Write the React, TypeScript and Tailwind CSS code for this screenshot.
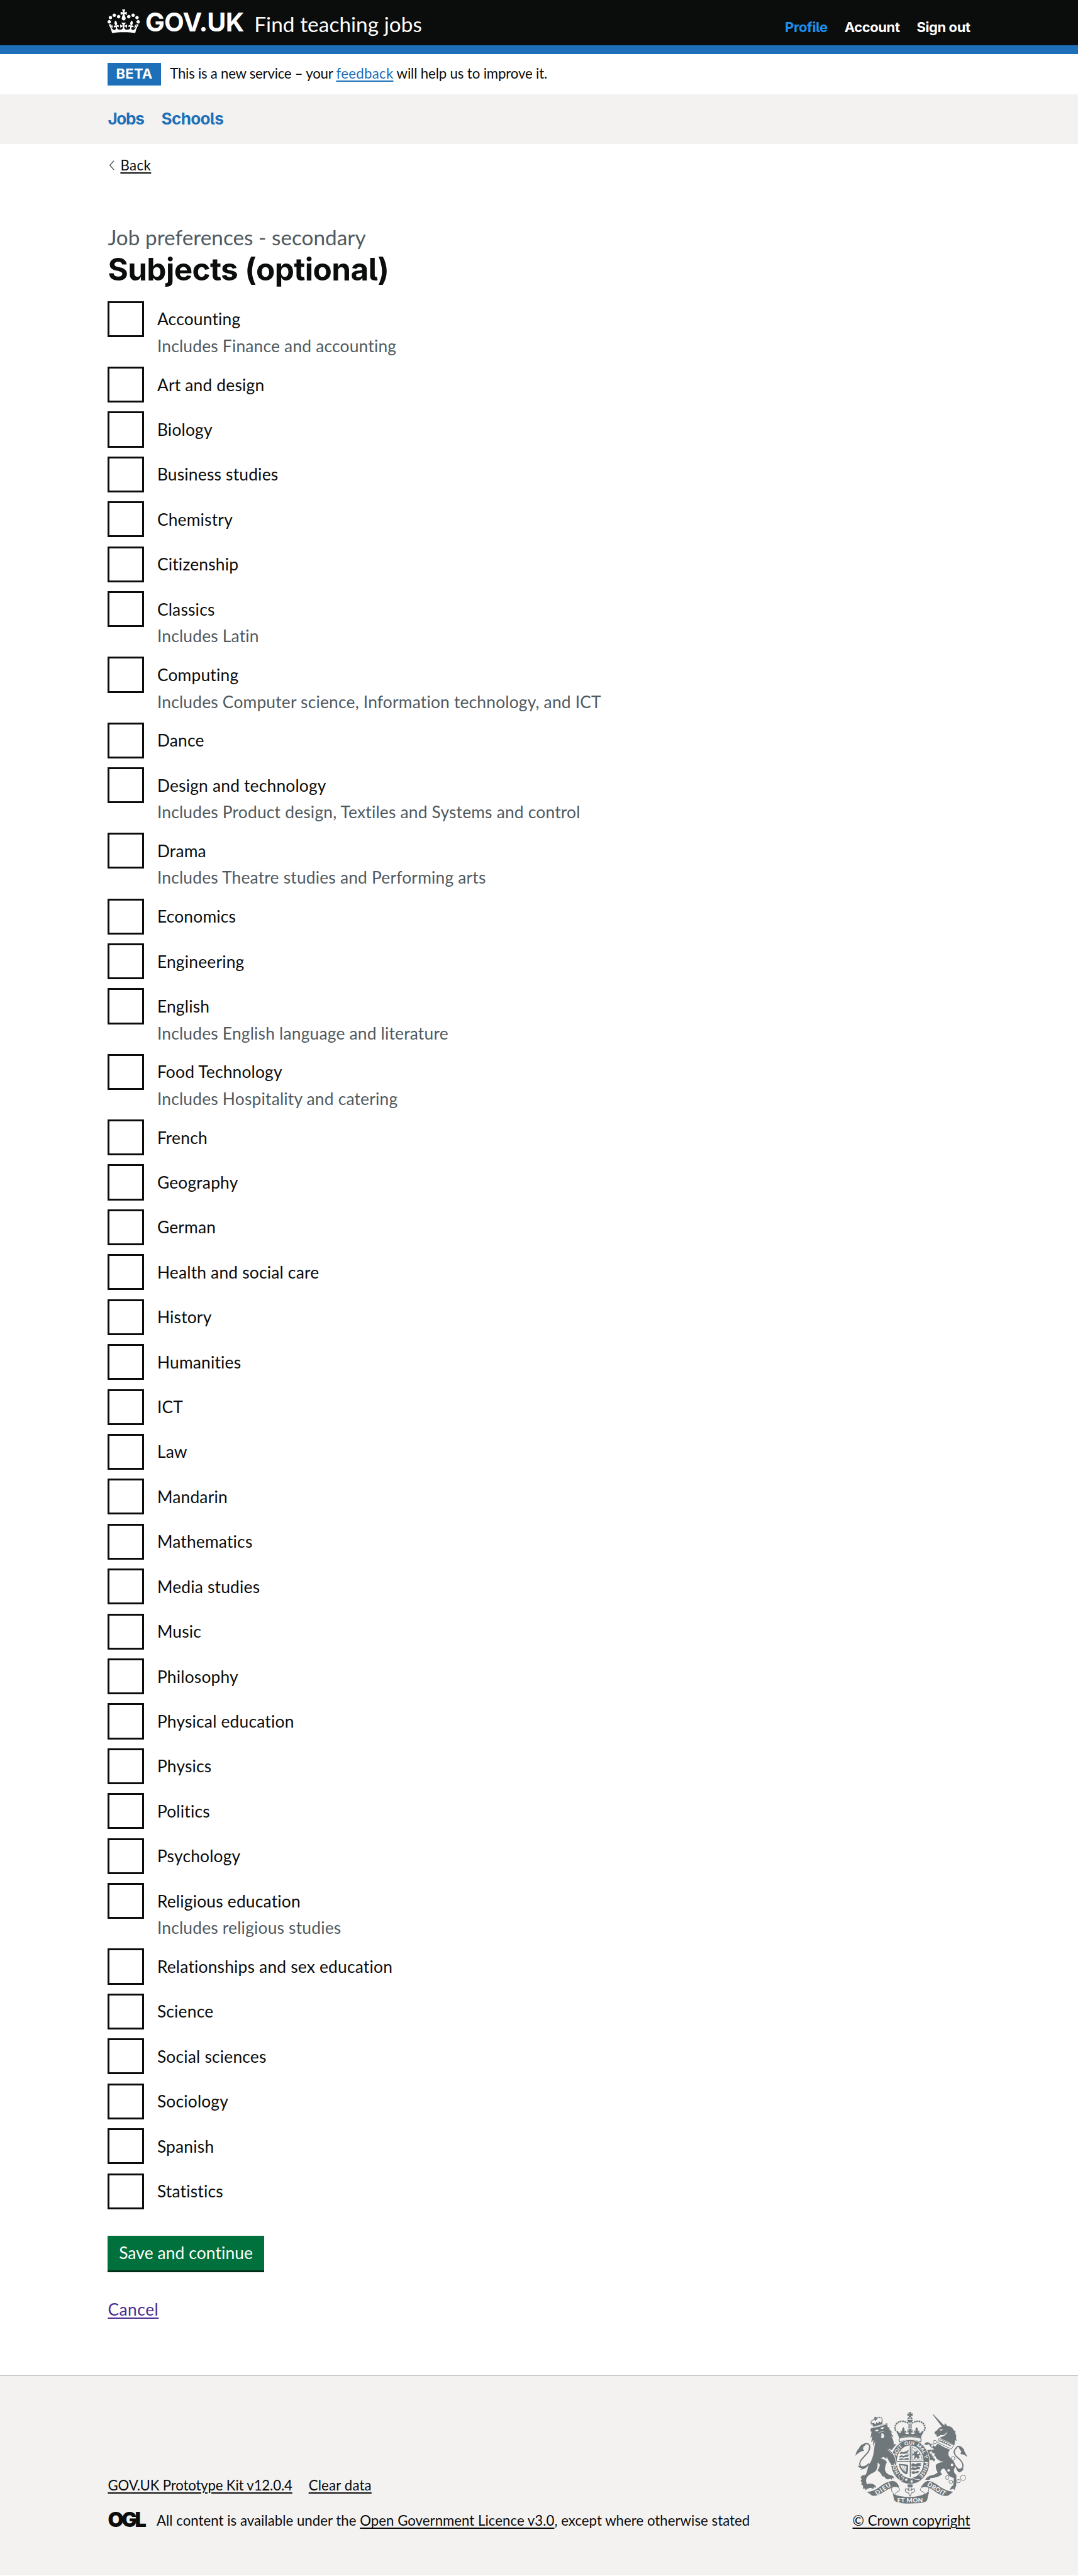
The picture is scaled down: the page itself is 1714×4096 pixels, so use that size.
type Subject = { name: string; hint?: string };

const subjects: Subject[] = [
  { name: 'Accounting', hint: 'Includes Finance and accounting' },
  { name: 'Art and design' },
  { name: 'Biology' },
  { name: 'Business studies' },
  { name: 'Chemistry' },
  { name: 'Citizenship' },
  { name: 'Classics', hint: 'Includes Latin' },
  { name: 'Computing', hint: 'Includes Computer science, Information technology, and ICT' },
  { name: 'Dance' },
  { name: 'Design and technology', hint: 'Includes Product design, Textiles and Systems and control' },
  { name: 'Drama', hint: 'Includes Theatre studies and Performing arts' },
  { name: 'Economics' },
  { name: 'Engineering' },
  { name: 'English', hint: 'Includes English language and literature' },
  { name: 'Food Technology', hint: 'Includes Hospitality and catering' },
  { name: 'French' },
  { name: 'Geography' },
  { name: 'German' },
  { name: 'Health and social care' },
  { name: 'History' },
  { name: 'Humanities' },
  { name: 'ICT' },
  { name: 'Law' },
  { name: 'Mandarin' },
  { name: 'Mathematics' },
  { name: 'Media studies' },
  { name: 'Music' },
  { name: 'Philosophy' },
  { name: 'Physical education' },
  { name: 'Physics' },
  { name: 'Politics' },
  { name: 'Psychology' },
  { name: 'Religious education', hint: 'Includes religious studies' },
  { name: 'Relationships and sex education' },
  { name: 'Science' },
  { name: 'Social sciences' },
  { name: 'Sociology' },
  { name: 'Spanish' },
  { name: 'Statistics' },
];

function Crown() {
  return (
    <svg viewBox="0 0 132 97" className="mt-[15px] h-[37.8px] w-[51.4px] shrink-0" fill="currentColor" fillRule="evenodd">
      <path d="M25 30.2c3.5 1.5 7.7-.2 9.1-3.7 1.5-3.6-.2-7.8-3.9-9.2-3.6-1.4-7.6.3-9.1 3.9-1.4 3.5.3 7.5 3.9 9zM9 39.5c3.6 1.5 7.8-.2 9.2-3.7 1.5-3.6-.2-7.8-3.9-9.1-3.6-1.5-7.6.2-9.1 3.8-1.4 3.5.3 7.5 3.8 9zM4.4 57.2c3.5 1.5 7.7-.2 9.1-3.8 1.5-3.6-.2-7.7-3.9-9.1-3.5-1.5-7.6.3-9.1 3.8-1.4 3.5.3 7.6 3.9 9.1zm38.3-21.4c3.5 1.5 7.7-.2 9.1-3.8 1.5-3.6-.2-7.7-3.9-9.1-3.6-1.5-7.6.3-9.1 3.8-1.3 3.6.4 7.7 3.9 9.1zm64.4-5.6c-3.6 1.5-7.8-.2-9.1-3.7-1.5-3.6.2-7.8 3.8-9.2 3.6-1.4 7.7.3 9.2 3.9 1.3 3.5-.4 7.5-3.9 9zm15.9 9.3c-3.6 1.5-7.7-.2-9.1-3.7-1.5-3.6.2-7.8 3.7-9.1 3.6-1.5 7.7.2 9.2 3.8 1.5 3.5-.3 7.5-3.8 9zm4.7 17.7c-3.6 1.5-7.8-.2-9.2-3.8-1.5-3.6.2-7.7 3.9-9.1 3.6-1.5 7.7.3 9.2 3.8 1.3 3.5-.4 7.6-3.9 9.1zM89.3 35.8c-3.6 1.5-7.8-.2-9.2-3.8-1.4-3.6.2-7.7 3.9-9.1 3.6-1.5 7.7.3 9.2 3.8 1.4 3.6-.3 7.7-3.9 9.1zM69.7 17.7l8.9 4.7V9.3l-8.9 2.8c-.2-.3-.5-.6-.9-.9L72.4 0H59.6l3.5 11.2c-.3.3-.6.5-.9.9l-8.8-2.8v13.1l8.8-4.7c.3.3.6.7.9.9l-5 15.4v.1c-.2.8-.4 1.6-.4 2.4 0 4.1 3.1 7.5 7 8.1h.2c.3 0 .7.1 1 .1.4 0 .7 0 1-.1h.2c4-.6 7.1-4.1 7.1-8.1 0-.8-.1-1.7-.4-2.4V34l-5.1-15.4c.4-.2.7-.6 1-.9zM66 92.8c16.9 0 32.8 1.1 47.1 3.2 4-16.9 8.9-26.7 14-33.5l-9.6-3.4c1 4.9 1.1 7.2 0 10.2-1.5-1.4-3-4.3-4.2-8.7L108.6 76c2.8-2 5-3.2 7.5-3.3-4.4 9.4-10 11.9-13.6 11.2-4.3-.8-6.3-4.6-5.6-7.9 1-4.7 5.7-5.9 8-.5 4.3-8.7-3-11.4-7.6-8.8 7.1-7.2 7.9-13.5 2.1-21.1-8 6.1-8.1 12.3-4.5 20.8-4.7-5.4-12.1-2.5-9.5 6.2 3.4-5.2 7.9-2 7.2 3.1-.6 4.3-6.4 7.8-13.5 7.2-10.3-.9-10.9-8-11.2-13.8 2.5-.5 7.1 1.8 11 7.3L80.2 60c-4.1 4.4-8 5.3-12.3 5.4 1.4-4.4 8-11.6 8-11.6H55.5s6.4 7.2 7.9 11.6c-4.2-.1-8-1-12.3-5.4l1.4 16.4c3.9-5.5 8.5-7.7 10.9-7.3-.3 5.8-.9 12.8-11.1 13.8-7.2.6-12.9-2.9-13.5-7.2-.7-5 3.8-8.3 7.1-3.1 2.7-8.7-4.6-11.6-9.4-6.2 3.7-8.5 3.6-14.7-4.6-20.8-5.8 7.6-5 13.9 2.2 21.1-4.7-2.6-11.9.1-7.7 8.8 2.3-5.5 7.1-4.2 8.1.5.7 3.3-1.3 7.1-5.7 7.9-3.5.7-9-1.8-13.5-11.2 2.5.1 4.7 1.3 7.5 3.3l-4.7-15.4c-1.2 4.4-2.7 7.2-4.3 8.7-1.1-3-.9-5.3 0-10.2l-9.5 3.4c5 6.9 9.9 16.7 14 33.5 14.8-2.1 30.8-3.2 47.7-3.2z" />
    </svg>
  );
}

const crownBeads: [number, number][] = [
  [660, 431], [645, 425], [630, 421], [614, 422], [600, 428], [588, 437], [580, 450], [577, 465], [580, 480],
];

const lionBeads: [number, number][] = [
  [419, 438], [417, 426], [424, 415], [435, 411], [461, 398], [472, 395], [483, 397], [490, 406], [492, 418],
];

function RoyalArms() {
  return (
    <svg viewBox="312 358 750 614" className="mr-[4.3px] h-[146.1px] w-[178.5px]" fill="#6f777b">
      {/* crown */}
      <path d="M666 360H688L681 372L694 366V388L681 382L687 394H667L673 382L660 388V366L673 372Z" />
      <path d="M659 408Q662 394 674 393V408ZM695 408Q692 394 680 393V408ZM658 413H696Q692 430 677 431Q662 430 658 413Z" />
      <path d="M667 436h8v32h-8zM680 436h8v32h-8z" />
      {crownBeads.map(([x, y]) => (
        <g key={x}>
          <circle cx={x} cy={y} r="6.2" />
          <circle cx={1354 - x} cy={y} r="6.2" />
        </g>
      ))}
      <path d="M633 460Q645 473 639 488L652 482V498L641 496Q650 512 668 504L671 494L660 500V478L672 485L664 470H691L683 485L694 478V500L683 494L686 504Q704 512 713 496L702 498V482L715 488Q709 473 721 460Q734 473 728 488L741 482L737 497Q752 505 757 483L769 490Q755 510 749 533Q677 505 605 533Q599 510 585 490L597 483Q602 505 617 497L613 482L626 488Q620 473 633 460Z" />
      <path d="M607 534Q677 514 748 534Q756 547 746 559Q677 532 609 559Q599 547 607 534Z" fill="none" stroke="#6f777b" strokeWidth="6" />

      {/* lion */}
      <path d="M412 483L418 464Q470 457 524 433L528 460L545 465L536 470L560 497L548 495L567 527L552 522Q570 548 568 574L587 574Q570 590 556 612L527 608Q560 636 572 660Q580 680 588 712L578 716L572 706L570 720L555 716Q552 704 542 697Q541 678 522 654L520 672L500 660L480 668Q518 678 522 695Q508 720 510 748Q520 775 545 780Q570 785 572 803L560 797L556 812L546 804L530 810Q508 805 508 792L490 788Q485 765 460 750Q472 735 476 712Q470 700 460 697Q465 740 440 760Q400 775 386 800Q380 830 392 842Q420 830 446 850L450 868L437 860L432 873L412 866Q395 868 378 882L377 868L366 876Q360 862 364 850L352 845L355 830L347 820L354 808L347 795Q352 785 362 780Q380 785 385 770Q395 740 400 712Q430 680 437 610Q440 585 446 552L430 588L432 545L418 562L424 520L413 535L420 493Z" />
      <path d="M422 434L432 458L494 440L491 418L480 430L470 420L464 436L452 426L446 443L436 432Z" />
      <path d="M440 394l7-5 5 6 7-1-3 8 4 6-9 1-1 9-6 0-2-9-8-1 4-6z" />
      {lionBeads.map(([x, y]) => (
        <circle key={x} cx={x} cy={y} r="4.6" />
      ))}
      <path d="M441 485Q452 472 468 480L462 488ZM480 470Q492 455 506 462L494 474ZM482 506Q500 492 506 522Q494 545 483 526L488 512Z" fill="#f3f2f1" />
      <path d="M466 500L480 492L500 490" fill="none" stroke="#f3f2f1" strokeWidth="3" />
      <path d="M416 465Q470 460 522 438" fill="none" stroke="#f3f2f1" strokeWidth="4" />
      <path d="M404 704Q370 735 348 724Q334 706 350 680Q372 655 398 625Q418 590 400 574Q385 566 368 576" fill="none" stroke="#6f777b" strokeWidth="8" />
      <path d="M384 569Q345 572 337 601Q318 618 312 652Q340 620 372 617Q358 608 366 592Q380 582 384 569Z" />
      <path d="M328 715Q350 725 372 720Q388 718 404 705Q390 742 345 744L360 732Q334 736 328 715Z" />

      {/* unicorn */}
      <path d="M828 376L834 376L908 452L894 462Z" />
      <path d="M905 453L911 433L926 453Q960 455 966 477L984 492L978 496L987 520L984 530L989 553L978 546L974 582Q930 555 890 540Q872 530 880 528Q925 515 926 487Q908 520 882 512L866 524L850 521L859 511Q844 514 841 494Q862 480 870 466Q885 456 905 453Z" />
      <path d="M872 480Q886 470 898 477L886 484Z" fill="#f3f2f1" />
      <path d="M870 536L970 580L954 606L862 564Z" fill="#f3f2f1" stroke="#6f777b" strokeWidth="4" />
      <path d="M870 556l7-12 7 12 9-8 5 15 9-8 7 15 10-8 5 15 9-8 5 15 9-4-3 8-70-30z" />
      <path d="M862 570Q900 594 945 611Q928 628 936 652Q950 672 966 684Q986 712 972 742Q966 766 987 780L986 850Q982 856 976 880L966 872L943 880Q952 854 966 850L970 800Q938 792 930 775Q918 752 905 736Q885 738 880 760L892 775Q860 800 815 800L808 812L779 812Q790 790 815 784Q850 776 862 762Q845 735 850 712Q870 692 905 694Q872 688 853 668L846 652Q830 640 822 622L806 626L828 660L845 676L838 690L826 680L812 682L806 658L786 620Q800 610 822 612L840 608L812 590L806 574L786 580L772 576Q782 558 800 562L846 590Z" />
      <path d="M983 606Q990 582 1010 590Q1030 600 1022 612M984 600Q960 625 985 655Q1032 690 1031 720Q1028 745 1000 742Q980 725 965 695" fill="none" stroke="#6f777b" strokeWidth="8" />
      <path d="M1000 588Q1035 590 1041 622L1062 660Q1040 642 1014 640L1020 622Q1008 610 1000 588Z" />
      <path d="M985 735Q1008 745 1036 735Q1030 755 1008 762Q992 758 985 735Z" />
      <g fill="none" stroke="#6f777b" strokeWidth="4">
        <ellipse cx="843" cy="560" rx="11" ry="12" />
        <ellipse cx="825" cy="584" rx="8" ry="11" fill="#f3f2f1" />
        <ellipse cx="832" cy="643" rx="12" ry="12" fill="#f3f2f1" />
        <ellipse cx="965" cy="669" rx="12" ry="12" fill="#f3f2f1" />
        <ellipse cx="926" cy="797" rx="11" ry="13" />
        <ellipse cx="950" cy="826" rx="13" ry="10" />
        <ellipse cx="1001" cy="821" rx="13" ry="11" />
        <circle cx="1031" cy="799" r="17" />
      </g>
      <circle cx="958" cy="713" r="9" fill="#f3f2f1" />
      <circle cx="935" cy="749" r="9" fill="#f3f2f1" />

      {/* garter */}
      <ellipse cx="678" cy="692" rx="110" ry="128" fill="none" stroke="#f3f2f1" strokeWidth="44" />
      <ellipse cx="678" cy="692" rx="109" ry="128" fill="none" stroke="#6f777b" strokeWidth="38" />
      <ellipse cx="678" cy="692" rx="87" ry="105" fill="#f3f2f1" />
      <path d="M540 608Q562 628 575 656Q584 680 588 714L578 718L572 706L570 720L552 716L541 696L530 660Z" stroke="#f3f2f1" strokeWidth="5" />
      <path d="M515 600L540 612L556 660L556 708L540 694L520 655Z" />
      <path d="M527 608L554 638" stroke="#f3f2f1" strokeWidth="3" />
      <path id="garter-line" d="M678 807A97 115 0 0 1 678 577A97 115 0 0 1 678 807" fill="none" />
      <g className="font-['Lato'] font-black" fontSize="33" fill="#f3f2f1" textAnchor="middle">
        <text><textPath href="#garter-line" startOffset="113">HO</textPath></text>
        <text><textPath href="#garter-line" startOffset="242">SOIT</textPath></text>
        <text><textPath href="#garter-line" startOffset="328">QUI</textPath></text>
        <text><textPath href="#garter-line" startOffset="411">MAL</textPath></text>
        <text><textPath href="#garter-line" startOffset="468">Y</textPath></text>
        <text><textPath href="#garter-line" startOffset="550">PENSE</textPath></text>
      </g>
      <path d="M600 785Q612 765 630 775L620 792L638 800L622 820Q598 815 606 795Z" stroke="#f3f2f1" strokeWidth="4" />
      <path d="M636 784Q680 806 745 812" fill="none" stroke="#f3f2f1" strokeWidth="4" />
      <circle cx="652" cy="811" r="8" fill="#f3f2f1" />
      <circle cx="688" cy="823" r="8" fill="#f3f2f1" />

      {/* quartered shield */}
      <path d="M676 587h6v206h-6zM590 686h177v6H590z" />
      <path d="M608 632l14-8 12 4 20-8 14-8v8l-10 8 12 8h-20l-16 4-10-4-12 6zM606 654l14-6 14 4 18-6 16-4v8l-8 4 8 6h-22l-14 4-12-4-12 4zM602 674l16-6 16 4 18-4 16-2v14h-22l-8-4-14 4-20 0z" />
      <path d="M686 706l14-4 12 6 20-8 20 2-6 10 8 6-20 2-14 6-16-4-16 4zM686 732l14-4 12 4 16-6 18 4-4 12-18 0-14 6-12-4-12 2zM686 758l14-4 12 4 16-6 12 4-10 12-16 0-12 6-12-4z" />
      <path d="M690 602V680H758M686 592Q745 612 760 676" fill="none" stroke="#6f777b" strokeWidth="4" />
      <path d="M700 612l10 14 14-10 6 12-10 4 10 10 12-8 4 14-12 2 8 14-12 10-8-12-8 4-4 8-10-6 8-10-4-12-10 6-2-12 12-4z" />
      <path d="M602 706Q632 704 664 712Q668 745 658 774L646 774Q608 752 602 706ZM612 716Q620 745 650 760L654 724Q632 714 612 716Z" fillRule="evenodd" />
      <path d="M624 716Q628 738 646 756M637 717Q639 732 652 746" fill="none" stroke="#6f777b" strokeWidth="3" />

      {/* fleur-de-lis pendant */}
      <path d="M661 843h33v18h-33z" />
      <path d="M677 852Q692 868 682 888Q694 868 708 874Q713 888 696 898Q686 896 684 908Q682 920 677 921Q672 920 671 908Q668 896 658 898Q641 888 647 874Q662 868 673 888Q663 868 677 852Z" fill="#f3f2f1" stroke="#6f777b" strokeWidth="5" />

      {/* motto ribbon */}
      <path d="M388 892Q432 892 470 862Q520 822 560 819Q592 820 605 862Q578 856 556 864Q520 878 490 900Q450 925 424 918Z" />
      <path d="M966 892Q922 888 880 860Q830 820 795 819Q765 828 750 864Q775 857 800 863Q830 878 862 902Q900 925 932 918Z" />
      <path d="M590 858Q617 874 604 886Q578 895 580 912M556 864Q545 888 572 906M764 858Q737 874 750 886Q778 895 776 912M800 863Q810 885 786 906" fill="none" stroke="#6f777b" strokeWidth="4" />
      <path d="M562 905Q600 926 677 927Q755 926 805 890Q796 930 791 950Q784 970 677 971Q578 970 571 945Z" />
      <g className="font-['Lato'] font-black" fontSize="42" fill="#f3f2f1" textAnchor="middle">
        <text x="677" y="963" textLength="172">ET MON</text>
        <text transform="translate(504 885) rotate(-33)" textLength="116">DIEU</text>
        <text transform="translate(847 885) rotate(31)" textLength="136">DROIT</text>
      </g>
    </svg>
  );
}

function SubjectRow({ name, hint }: Subject) {
  return (
    <div className="pb-[14.3px]">
      <div className="flex items-center">
        <span className="size-[57.14px] shrink-0 border-3 border-[#0b0c0c] bg-white" />
        <span className="pl-[21.4px] leading-8">{name}</span>
      </div>
      {hint && <div className="pb-[4.65px] pl-[78.5px] leading-[28.2px] text-[#505a5f]">{hint}</div>}
    </div>
  );
}

const link = 'underline decoration-[1.5px] underline-offset-[3px]';

export default function App() {
  return (
    <div className="min-h-[4096px] w-[1714px] bg-white font-['Lato',sans-serif] text-[26.38px] text-[#0b0c0c] [font-variant-ligatures:none]">
      <header className="h-[85.7px] border-b-14 border-[#1d70b8] bg-[#0b0c0c] px-[171.4px] text-white">
        <div className="flex items-start">
          <Crown />
          <span className="ml-[8.2px] w-[173.3px] pt-[15.2px] font-['Inter'] text-[41.26px] leading-[41px] font-bold tracking-[-0.02em]">GOV.UK</span>
          <span className="pt-[17.8px] text-[33.33px] leading-10 tracking-[0.002em]">Find teaching jobs</span>
          <nav className="ml-auto flex gap-[27px] pt-[28.7px] font-['Inter'] text-[22px] leading-7 font-bold tracking-[-0.019em] [font-feature-settings:'cv05']">
            <a className="text-[#1d8feb]">Profile</a>
            <a>Account</a>
            <a>Sign out</a>
          </nav>
        </div>
      </header>

      <div className="flex h-[64.3px] items-center px-[171.4px] text-[22.22px]">
        <strong className="flex h-[35.7px] w-[84.3px] items-center justify-center bg-[#1d70b8] font-['Inter'] text-[22px] font-bold tracking-[0.01em] text-white">BETA</strong>
        <p className="mb-[1.4px] pl-[14.6px] leading-7 tracking-[-0.0115em]">
          This is a new service – your <a className={`${link} tracking-[0.013em] text-[#1d70b8]`}>feedback</a>
          <span className="tracking-[-0.0065em]"> will help us to improve it.</span>
        </p>
      </div>

      <nav className="flex h-[78.6px] items-center gap-[28px] bg-[#f3f2f1] px-[171.4px] pb-px font-['Inter'] text-[26.13px] font-bold tracking-[-0.027em] text-[#1d70b8] [font-feature-settings:'cv05']">
        <a className="tracking-[-0.05em]">Jobs</a>
        <a>Schools</a>
      </nav>

      <main className="px-[171.4px] pt-[20.7px]">
        <div className="flex items-center text-[22.22px] leading-7">
          <svg viewBox="0 0 12 22" className="mr-[9px] ml-[2px] h-[15.7px] w-[9px]" fill="none" stroke="#505a5f" strokeWidth="2">
            <path d="M11 1L2 11L11 21" />
          </svg>
          <a className={`${link} tracking-[0.02em]`}>Back</a>
        </div>

        <p className="mt-[79.9px] text-[33.33px] leading-10 text-[#505a5f]">Job preferences - secondary</p>
        <h1 className="mt-[4.2px] font-['Inter'] text-[49.5px] leading-[54px] font-bold tracking-[-0.013em] [font-feature-settings:'cv05']">Subjects (optional)</h1>

        <div className="mt-[23.4px] tracking-[0.007em]">
          {subjects.map((s) => (
            <SubjectRow key={s.name} {...s} />
          ))}
        </div>

        <button className="mt-[28.5px] flex h-[54.3px] w-[248.5px] items-center justify-center bg-[#00703c] tracking-[0.004em] text-white shadow-[0_3px_0_#002d18]">
          Save and continue
        </button>
        <p className="mt-[46.6px] leading-8">
          <a className={`${link} tracking-[0.019em] text-[#4c2c92]`}>Cancel</a>
        </p>
      </main>

      <footer className="mt-[88.6px] flex h-[318.4px] items-end justify-between border-t border-[#b1b4b6] bg-[#f3f2f1] px-[171.4px] pb-[73px] text-[22.22px] leading-7">
        <div className="flex flex-col gap-[28.7px]">
          <div className="flex gap-[26px]">
            <a className={`${link} tracking-[-0.0075em]`}>GOV.UK Prototype Kit v12.0.4</a>
            <a className={`${link} tracking-[0.007em]`}>Clear data</a>
          </div>
          <div className="flex">
            <span className="-mt-px w-[77.6px] font-['Inter'] text-[32.5px] font-black tracking-[-0.1em]">OGL</span>
            <span className="tracking-[0.001em]">
              All content is available under the <a className={link}>Open Government Licence v3.0</a>, except where otherwise stated
            </span>
          </div>
        </div>
        <div className="flex flex-col items-end gap-[13.5px]">
          <RoyalArms />
          <a className={`${link} tracking-[0.002em]`}>© Crown copyright</a>
        </div>
      </footer>
    </div>
  );
}
